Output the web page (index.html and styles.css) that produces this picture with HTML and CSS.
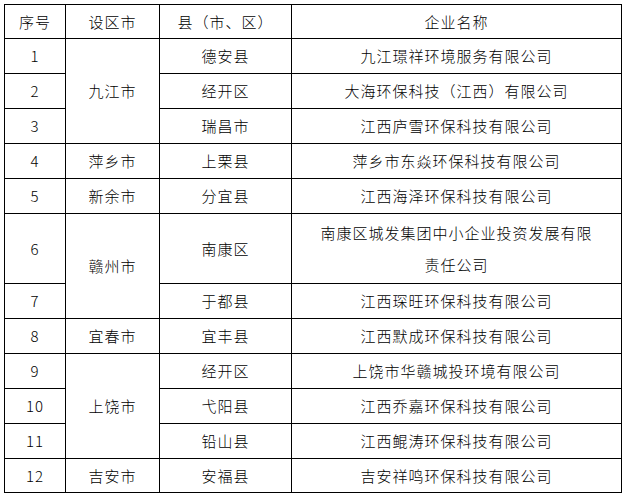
FILE: index.html
```html
<!DOCTYPE html>
<html lang="zh-CN">
<head>
<meta charset="utf-8">
<title>企业名单</title>
<link rel="stylesheet" href="styles.css">
</head>
<body>
<table class="list">
  <colgroup>
    <col class="c-no">
    <col class="c-city">
    <col class="c-county">
    <col class="c-name">
  </colgroup>
  <thead>
    <tr class="head"><th>序号</th><th>设区市</th><th>县（市、区）</th><th>企业名称</th></tr>
  </thead>
  <tbody>
    <tr><td>1</td><td rowspan="3">九江市</td><td>德安县</td><td class="name">九江璟祥环境服务有限公司</td></tr>
    <tr><td>2</td><td>经开区</td><td class="name">大海环保科技（江西）有限公司</td></tr>
    <tr><td>3</td><td>瑞昌市</td><td class="name">江西庐雪环保科技有限公司</td></tr>
    <tr><td>4</td><td>萍乡市</td><td>上栗县</td><td class="name">萍乡市东焱环保科技有限公司</td></tr>
    <tr><td>5</td><td>新余市</td><td>分宜县</td><td class="name">江西海泽环保科技有限公司</td></tr>
    <tr class="tall"><td>6</td><td rowspan="2">赣州市</td><td>南康区</td><td class="name">南康区城发集团中小企业投资发展有限责任公司</td></tr>
    <tr><td>7</td><td>于都县</td><td class="name">江西琛旺环保科技有限公司</td></tr>
    <tr><td>8</td><td>宜春市</td><td>宜丰县</td><td class="name">江西默成环保科技有限公司</td></tr>
    <tr><td>9</td><td rowspan="3">上饶市</td><td>经开区</td><td class="name">上饶市华赣城投环境有限公司</td></tr>
    <tr><td>10</td><td>弋阳县</td><td class="name">江西乔嘉环保科技有限公司</td></tr>
    <tr><td>11</td><td>铅山县</td><td class="name">江西鲲涛环保科技有限公司</td></tr>
    <tr class="last"><td>12</td><td>吉安市</td><td>安福县</td><td class="name">吉安祥鸣环保科技有限公司</td></tr>
  </tbody>
</table>
</body>
</html>
```

FILE: styles.css
```css
html, body {
  margin: 0;
  padding: 0;
  background: #ffffff;
}
body {
  padding: 4px;
  font-family: "Noto Sans CJK SC", "Noto Sans", sans-serif;
  font-size: 15px;
  font-weight: 300;
  color: #000000;
}
.list {
  border-collapse: collapse;
  table-layout: fixed;
  width: 617px;
}
.c-no { width: 61px; }
.c-city { width: 94px; }
.c-county { width: 132px; }
.c-name { width: 330px; }
.list th,
.list td {
  border: 1px solid #000000;
  padding: 0;
  text-align: center;
  vertical-align: middle;
  font-weight: 300;
  line-height: 32px;
  letter-spacing: 1px;
}
.list td.name {
  padding: 0 26px;
}
.list tr { height: 35px; }
.list tr.head { height: 34px; }
.list tr.tall { height: 70px; }
.list tr.last { height: 34px; }
```
